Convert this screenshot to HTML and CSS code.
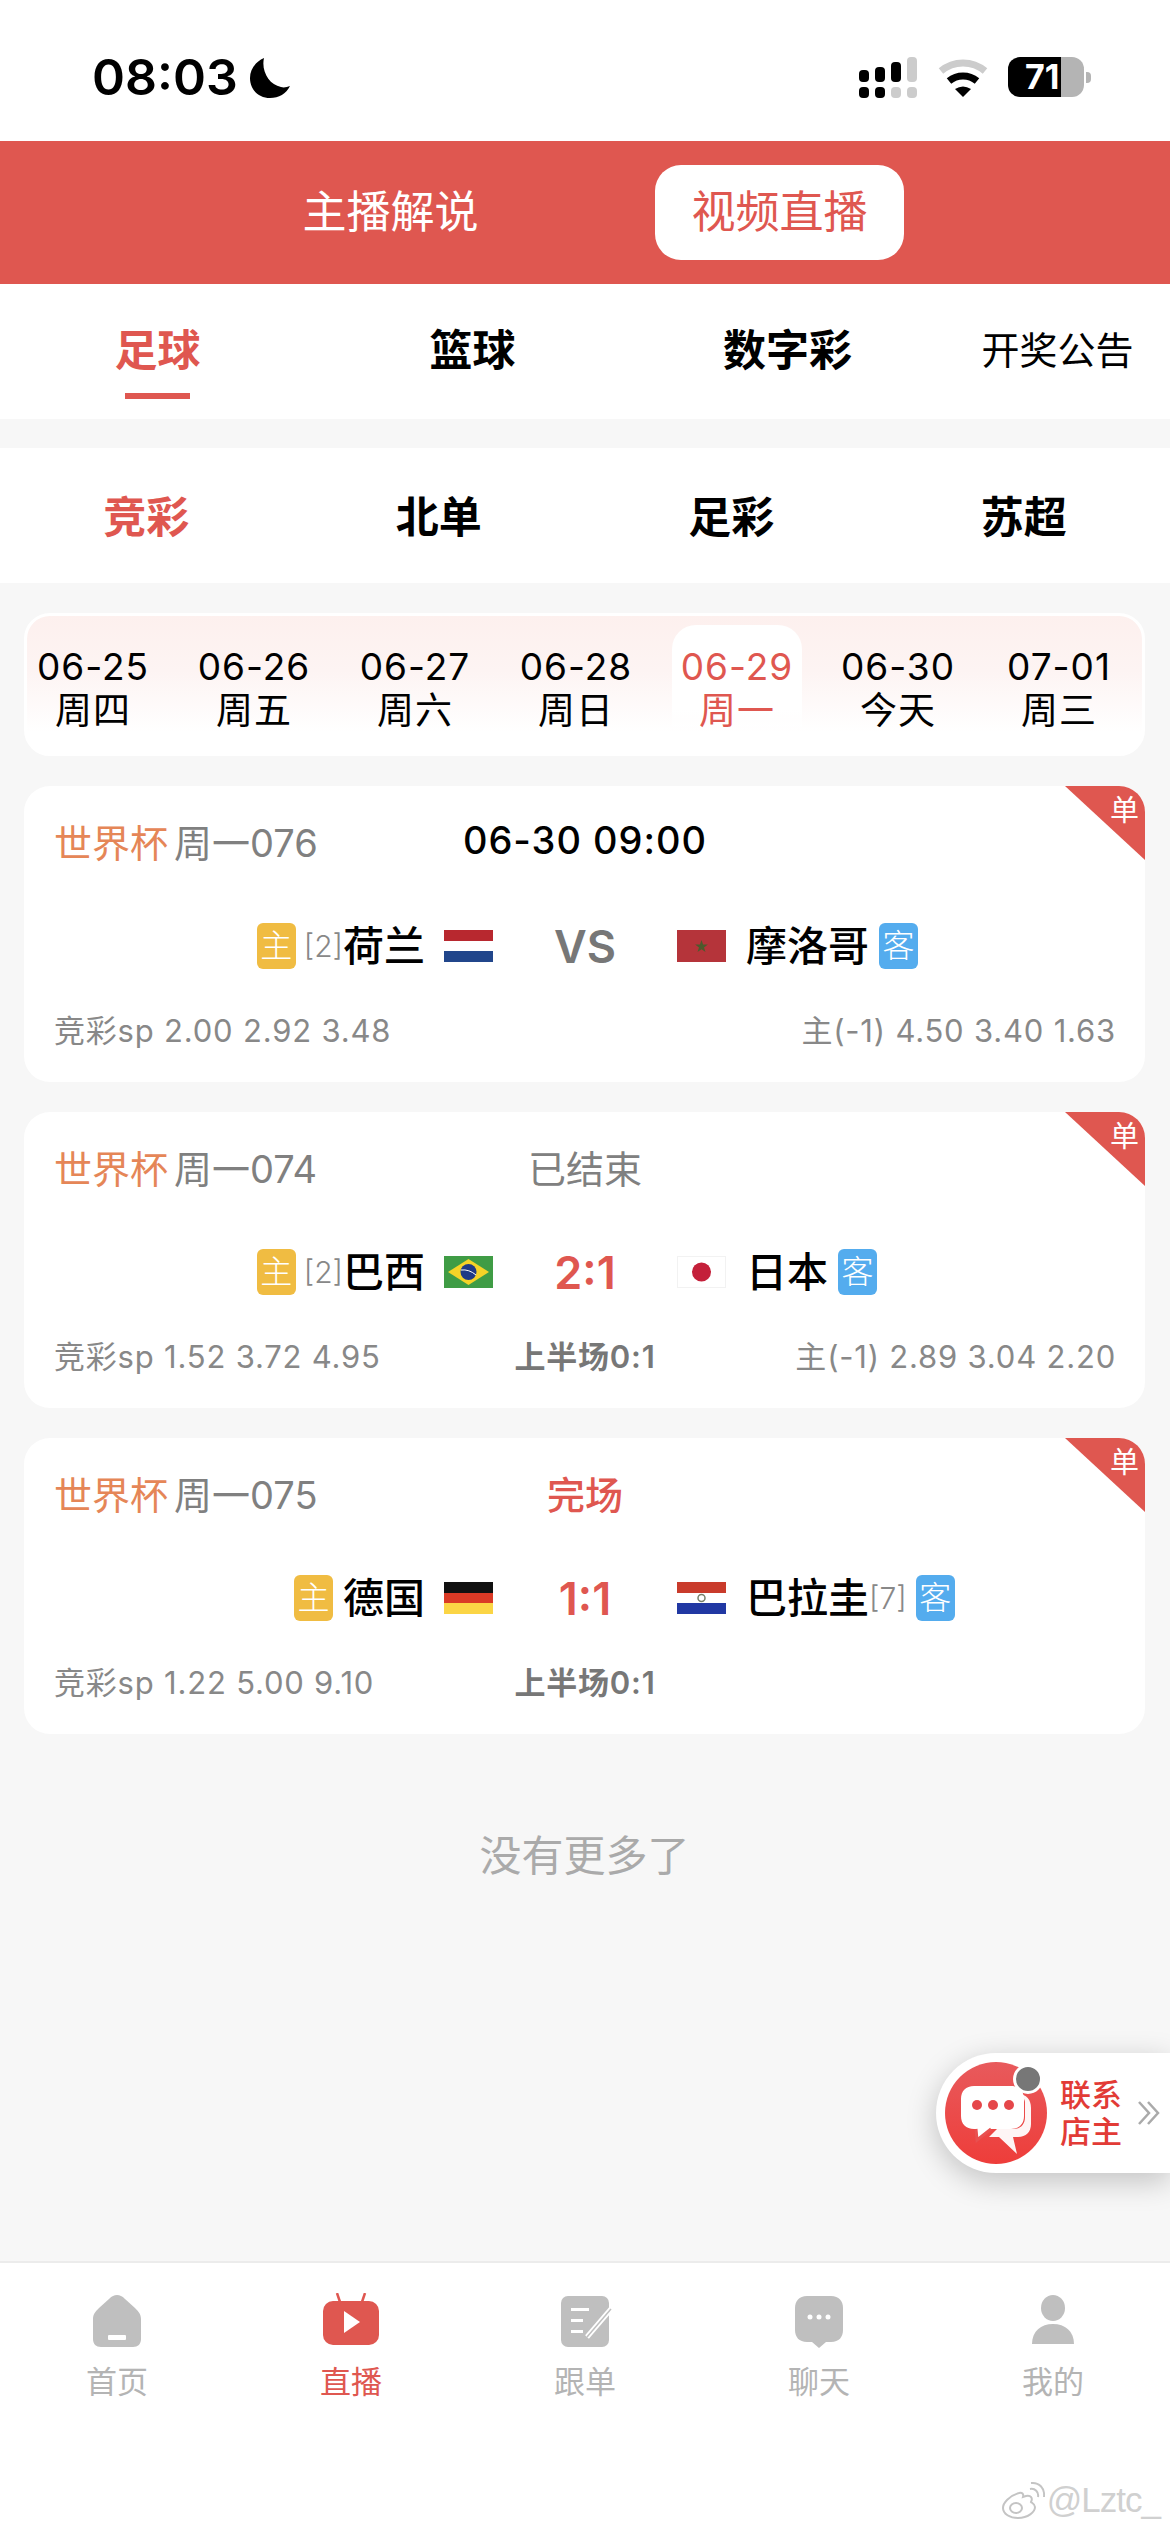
FILE: index.html
```html
<!DOCTYPE html>
<html lang="zh-CN">
<head>
<meta charset="UTF-8" />
<meta name="viewport" content="width=device-width, initial-scale=1" />
<title>视频直播</title>
<link rel="stylesheet" href="styles.css">
</head>
<body>
  <div class="page">
    <div class="status-bar">
      <div class="clock">
        <span>08:03</span>
        <svg class="moon" viewBox="0 0 40 40"><path d="M14 0C5 4 0 12 0 20c0 12 9 20 20 20 9 0 16-4 20-12-3 1-6 2-9 1C19 27 11 13 14 0z"/></svg>
      </div>
      <svg class="status-icons" width="240" height="44" viewBox="0 0 240 44">
        <g fill="#000">
          <rect x="0" y="16" width="10" height="12" rx="4"/>
          <rect x="16" y="13" width="10" height="15" rx="4"/>
          <rect x="32" y="8" width="10" height="20" rx="4"/>
          <rect x="0" y="33" width="10" height="11" rx="4"/>
          <rect x="16" y="33" width="10" height="11" rx="4"/>
        </g>
        <g fill="#ccc">
          <rect x="48" y="3" width="10" height="25" rx="4"/>
          <rect x="32" y="33" width="10" height="11" rx="4"/>
          <rect x="48" y="33" width="10" height="11" rx="4"/>
        </g>
        <path d="M82 17 A34 34 0 0 1 126 17" fill="none" stroke="#ccc" stroke-width="7"/>
        <path d="M90 27 A22 22 0 0 1 118 27" fill="none" stroke="#000" stroke-width="7"/>
        <path d="M104 43 L96 35 Q104 30 112 35 Z" fill="#000"/>
      </svg>
      <div class="battery">
        <div class="battery-body"><span class="battery-level">71</span></div>
        <div class="battery-nub"></div>
      </div>
    </div>

    <div class="top-switch">
      <div class="switch-item">主播解说</div>
      <div class="switch-item active">视频直播</div>
    </div>

    <div class="sport-tabs">
      <div class="sport-tab active">足球</div>
      <div class="sport-tab">篮球</div>
      <div class="sport-tab">数字彩</div>
      <div class="sport-tab plain">开奖公告</div>
    </div>

    <div class="lottery-tabs">
      <div class="lottery-tab active">竞彩</div>
      <div class="lottery-tab">北单</div>
      <div class="lottery-tab">足彩</div>
      <div class="lottery-tab">苏超</div>
    </div>

    <div class="content">
      <div class="dates">
        <div class="date"><span>06-25</span><span>周四</span></div>
        <div class="date"><span>06-26</span><span>周五</span></div>
        <div class="date"><span>06-27</span><span>周六</span></div>
        <div class="date"><span>06-28</span><span>周日</span></div>
        <div class="date active"><span>06-29</span><span>周一</span></div>
        <div class="date"><span>06-30</span><span>今天</span></div>
        <div class="date"><span>07-01</span><span>周三</span></div>
      </div>

      <div class="card">
        <div class="ribbon"><span>单</span></div>
        <div class="card-head">
          <div><span class="league">世界杯</span><span class="num">周一076</span></div>
          <div class="state time">06-30 09:00</div>
          <div></div>
        </div>
        <div class="match">
          <div class="team home">
            <span class="side home-side">主</span><span class="rank">[2]</span><span class="name">荷兰</span>
            <svg class="flag" viewBox="0 0 49 32"><rect width="49" height="11" fill="#b8282f"/><rect y="11" width="49" height="10" fill="#fff"/><rect y="21" width="49" height="11" fill="#21468b"/></svg>
          </div>
          <div class="score vs">VS</div>
          <div class="team away">
            <svg class="flag" viewBox="0 0 49 32"><rect width="49" height="32" fill="#b5343a"/><path d="M24.5 10l1.6 4.6h4.8l-3.9 2.9 1.5 4.6-4-2.8-4 2.8 1.500-4.600-3.900-2.900h4.800z" fill="#4d5a2c"/></svg>
            <span class="name">摩洛哥</span><span class="side away-side">客</span>
          </div>
        </div>
        <div class="odds">
          <div>竞彩sp 2.00 2.92 3.48</div>
          <div class="half"></div>
          <div class="odds-right">主(-1) 4.50 3.40 1.63</div>
        </div>
      </div>

      <div class="card">
        <div class="ribbon"><span>单</span></div>
        <div class="card-head">
          <div><span class="league">世界杯</span><span class="num">周一074</span></div>
          <div class="state">已结束</div>
          <div></div>
        </div>
        <div class="match">
          <div class="team home">
            <span class="side home-side">主</span><span class="rank">[2]</span><span class="name">巴西</span>
            <svg class="flag" viewBox="0 0 49 32"><rect width="49" height="32" fill="#3f9c45"/><path d="M24.5 3L45 16 24.5 29 4 16z" fill="#f5d327"/><circle cx="24.5" cy="16" r="8" fill="#1f3a86"/><path d="M17 14q8-1 15 5" stroke="#fff" stroke-width="1" fill="none"/></svg>
          </div>
          <div class="score">2:1</div>
          <div class="team away">
            <svg class="flag" viewBox="0 0 49 32"><rect x=".5" y=".5" width="48" height="31" fill="#fff" stroke="#f2f2f2"/><circle cx="24.5" cy="16" r="9.500" fill="#c4203a"/></svg>
            <span class="name">日本</span><span class="side away-side">客</span>
          </div>
        </div>
        <div class="odds">
          <div>竞彩sp 1.52 3.72 4.95</div>
          <div class="half">上半场0:1</div>
          <div class="odds-right">主(-1) 2.89 3.04 2.20</div>
        </div>
      </div>

      <div class="card">
        <div class="ribbon"><span>单</span></div>
        <div class="card-head">
          <div><span class="league">世界杯</span><span class="num">周一075</span></div>
          <div class="state done">完场</div>
          <div></div>
        </div>
        <div class="match">
          <div class="team home">
            <span class="side home-side no-rank">主</span><span class="name">德国</span>
            <svg class="flag" viewBox="0 0 49 32"><rect width="49" height="11" fill="#111"/><rect y="11" width="49" height="10" fill="#da3a26"/><rect y="21" width="49" height="11" fill="#fbd545"/></svg>
          </div>
          <div class="score">1:1</div>
          <div class="team away">
            <svg class="flag" viewBox="0 0 49 32"><rect width="49" height="11" fill="#c93b2b"/><rect y="11" width="49" height="10" fill="#fff"/><rect y="21" width="49" height="11" fill="#2138a3"/><circle cx="24.5" cy="16" r="3.500" fill="none" stroke="#77806a" stroke-width="1.500"/></svg>
            <span class="name">巴拉圭</span><span class="rank">[7]</span><span class="side away-side">客</span>
          </div>
        </div>
        <div class="odds">
          <div>竞彩sp 1.22 5.00 9.10</div>
          <div class="half">上半场0:1</div>
          <div></div>
        </div>
      </div>

      <div class="no-more">没有更多了</div>
    </div>

    <div class="contact">
      <div class="contact-icon">
        <svg viewBox="0 0 102 102" width="102" height="102">
          <defs><linearGradient id="contactRed" x1="0" y1="0" x2="0" y2="1"><stop offset="0" stop-color="#e85a5c"/><stop offset="1" stop-color="#ee3d3a"/></linearGradient></defs>
          <circle cx="51" cy="51" r="51" fill="url(#contactRed)"/>
          <path d="M70 32h2c10 0 14 6 14 14v16c0 8-5 13-13 13h-5l4 17-18-17H44l8-8h16c8 0 12-5 12-12V40c0-3-3-6-10-8z" fill="#fff" opacity=".95"/>
          <path d="M29 24h37c9 0 13 6 13 13v17c0 8-5 13-13 13H46L32 78l-1-11h-2c-8 0-13-5-13-13V37c0-8 5-13 13-13z" fill="#fff"/>
          <path d="M46 67L32 78l-1-11" fill="none" stroke="#e85050" stroke-width="3"/>
          <circle cx="32" cy="43" r="5" fill="#e5474a"/><circle cx="48" cy="43" r="5" fill="#e5474a"/><circle cx="64" cy="43" r="5" fill="#e5474a"/>
        </svg>
        <span class="contact-dot"></span>
      </div>
      <div class="contact-text">联系<br>店主</div>
      <svg class="contact-more" width="22" height="26" viewBox="0 0 22 26"><path d="M1 2l10 11L1 24M10 2l10 11-10 11" fill="none" stroke="#aaa" stroke-width="2.500"/></svg>
    </div>

    <div class="tab-bar">
      <div class="tab-item">
        <svg class="tab-icon" viewBox="0 0 56 56"><path d="M28 2c3 0 5 1 8 4l10 9c3 3 6 6 6 11v20c0 5-3 8-8 8H12c-5 0-8-3-8-8V26c0-5 3-8 6-11L20 6c3-3 5-4 8-4z" fill="#bfbfbf"/><rect x="19" y="42" width="18" height="5" rx="1" fill="#fff"/></svg>
        <span>首页</span>
      </div>
      <div class="tab-item active">
        <svg class="tab-icon" viewBox="0 0 56 56"><path d="M17 9L14 0M39 9l3-9" stroke="#df5750" stroke-width="2.500"/><rect y="8" width="56" height="44" rx="10" fill="#df5750"/><path d="M21 18l16 11-16 11z" fill="#fff"/></svg>
        <span>直播</span>
      </div>
      <div class="tab-item">
        <svg class="tab-icon" viewBox="0 0 56 56"><rect x="4" y="3" width="48" height="51" rx="7" fill="#bfbfbf"/><rect x="14" y="15" width="18" height="3" fill="#fff"/><rect x="14" y="26" width="12" height="3" fill="#fff"/><rect x="14" y="37" width="12" height="3" fill="#fff"/><path d="M30 44L54 16" stroke="#fff" stroke-width="5"/><path d="M30 44L54 16" stroke="#bfbfbf" stroke-width="1.500"/></svg>
        <span>跟单</span>
      </div>
      <div class="tab-item">
        <svg class="tab-icon" viewBox="0 0 56 56"><path d="M16 3h24c8 0 12 5 12 12v22c0 7-4 12-12 12h-5l-7 6-7-6h-5C8 49 4 44 4 37V15C4 8 8 3 16 3z" fill="#bfbfbf"/><circle cx="19" cy="24" r="2.500" fill="#fff"/><circle cx="28" cy="24" r="2.500" fill="#fff"/><circle cx="37" cy="24" r="2.500" fill="#fff"/></svg>
        <span>聊天</span>
      </div>
      <div class="tab-item">
        <svg class="tab-icon" viewBox="0 0 56 56"><ellipse cx="28" cy="15" rx="12" ry="13" fill="#bfbfbf"/><path d="M7 51c0-13 9-20 21-20s21 7 21 20z" fill="#bfbfbf"/></svg>
        <span>我的</span>
      </div>
    </div>

    <div class="watermark">
      <svg width="44" height="38" viewBox="0 0 44 38"><path d="M18 12C8 15 2 22 2 27c0 6 7 10 15 10 10 0 17-6 17-11 0-3-3-4-4-5 2-4 0-7-5-6l-3 1c1-3-1-5-4-4z" fill="#fff" stroke="#c4c4c4" stroke-width="2"/><ellipse cx="15" cy="27" rx="6" ry="5" fill="none" stroke="#c4c4c4" stroke-width="2"/><path d="M29 8c5-1 9 3 8 8M30 2c8-1 14 5 13 14" fill="none" stroke="#c4c4c4" stroke-width="2"/></svg>
      <span>@Lztc_</span>
    </div>
  </div>
</body>
</html>
```

FILE: styles.css
```css
* {
  box-sizing: border-box;
}
body {
  margin: 0;
  background-color: #f7f7f7;
  color: #000;
  font-family: "Inter", "Noto Sans CJK SC", sans-serif;
}
.page {
  position: relative;
  width: 1170px;
  height: 2532px;
  display: flex;
  flex-direction: column;
  overflow: hidden;
}

.status-bar {
  height: 141px;
  background-color: #fff;
  display: flex;
  align-items: flex-start;
  padding: 54px 79px 0 92px;
}
.clock {
  display: flex;
  align-items: center;
  gap: 12px;
  font-size: 50px;
  font-weight: 600;
  line-height: 46px;
  flex: 1;
}
.moon {
  width: 40px;
  height: 40px;
  margin-top: 2px;
}
.battery {
  display: flex;
  align-items: center;
  margin-left: -91px;
  margin-top: 3px;
}
.battery-body {
  width: 76px;
  height: 40px;
  border-radius: 12px;
  background: linear-gradient(90deg, #000 53px, #b4b4b4 53px);
  color: #fff;
  font-size: 34px;
  font-weight: 700;
  line-height: 40px;
  padding-left: 17px;
}
.battery-level {
  display: block;
  height: 40px;
}
.battery-nub {
  width: 5px;
  height: 11px;
  margin-left: 2px;
  background-color: #b4b4b4;
  border-radius: 0 4px 4px 0;
}

.top-switch {
  height: 143px;
  background-color: #df5750;
  display: flex;
  justify-content: center;
  align-items: center;
  gap: 140px;
}
.switch-item {
  width: 249px;
  height: 95px;
  line-height: 95px;
  text-align: center;
  color: #fff;
  font-size: 44px;
  border-radius: 26px;
}
.switch-item.active {
  background-color: #fff;
  color: #df5750;
}

.sport-tabs {
  height: 135px;
  padding-bottom: 9px;
  background-color: #fff;
  display: grid;
  grid-template-columns: repeat(3, 315px) 1fr;
  align-items: center;
}
.sport-tab {
  position: relative;
  text-align: center;
  font-size: 43px;
  font-weight: 700;
}
.sport-tab.active {
  color: #df5750;
}
.sport-tab.active::after {
  content: "";
  position: absolute;
  left: 125px;
  bottom: -21px;
  width: 65px;
  height: 6px;
  background-color: #df5750;
}
.sport-tab.plain {
  font-size: 38px;
  font-weight: 400;
}

.lottery-tabs {
  height: 135px;
  padding-bottom: 3px;
  margin-top: 29px;
  background-color: #fff;
  display: grid;
  grid-template-columns: repeat(4, 1fr);
  align-items: center;
}
.lottery-tab {
  text-align: center;
  font-size: 43px;
  font-weight: 700;
}
.lottery-tab.active {
  color: #df5750;
}

.content {
  flex: 1;
  padding: 30px 25px 0 24px;
}
.dates {
  height: 143px;
  border: 3px solid #fff;
  border-radius: 26px;
  background: linear-gradient(180deg, #fdf0ee 0%, #fdf4f3 40%, #fff 85%);
  display: flex;
  gap: 31px;
  padding-top: 9px;
  overflow: hidden;
}
.date {
  flex: none;
  width: 130px;
  height: 120px;
  border-radius: 24px 24px 0 0;
  display: flex;
  flex-direction: column;
  align-items: center;
  font-size: 37px;
  letter-spacing: 1px;
  line-height: 44px;
  padding-top: 20px;
}
.date:first-child {
  margin-left: 1px;
}
.date.active {
  background: linear-gradient(180deg, #fff 0%, #fff 70%, rgba(255, 255, 255, 0) 100%);
  color: #df5750;
}

.card {
  position: relative;
  height: 296px;
  margin-top: 30px;
  padding: 0 29px 0 30px;
  background-color: #fff;
  border-radius: 26px;
  overflow: hidden;
}
.ribbon {
  position: absolute;
  top: 0;
  right: 0;
  width: 80px;
  height: 74px;
  background-color: #df5750;
  clip-path: polygon(0 0, 100% 0, 100% 100%);
}
.ribbon span {
  position: absolute;
  top: 8px;
  right: 6px;
  color: #fff;
  font-size: 29px;
  line-height: 34px;
}
.card-head {
  height: 108px;
  display: grid;
  grid-template-columns: 1fr auto 1fr;
  align-items: center;
  font-size: 38px;
}
.league {
  color: #e58657;
  margin-right: 6px;
}
.num {
  color: #808080;
}
.state {
  color: #808080;
}
.state.time {
  color: #000;
  font-weight: 500;
  letter-spacing: 1px;
}
.state.done {
  color: #df5750;
  font-weight: 500;
}
.match {
  height: 100px;
  padding-top: 4px;
  display: grid;
  grid-template-columns: 1fr 184px 1fr;
  align-items: center;
}
.team {
  display: flex;
  align-items: center;
}
.team.home {
  justify-content: flex-end;
}
.name {
  font-size: 41px;
  font-weight: 500;
  line-height: 46px;
}
.rank {
  color: #888;
  font-size: 30px;
  font-weight: 300;
}
.side {
  width: 39px;
  height: 46px;
  line-height: 46px;
  border-radius: 6px;
  text-align: center;
  color: #fff;
  font-size: 32px;
  font-weight: 300;
}
.home-side {
  background-color: #f0bc42;
  margin-right: 8px;
}
.home-side.no-rank {
  margin-right: 10px;
}
.away-side {
  background-color: #54acee;
  margin-left: 10px;
}
.rank + .away-side {
  margin-left: 9px;
}
.flag {
  flex: none;
  width: 49px;
  height: 32px;
}
.home .flag {
  margin-left: 19px;
}
.away .flag {
  margin-right: 20px;
}
.score {
  text-align: center;
  color: #df5750;
  font-size: 45px;
  font-weight: 600;
}
.score.vs {
  color: #777;
}
.odds {
  height: 68px;
  display: grid;
  grid-template-columns: 1fr auto 1fr;
  align-items: center;
  color: #888;
  font-size: 31px;
  letter-spacing: 0.8px;
}
.half {
  color: #777;
  font-weight: 600;
}
.odds-right {
  text-align: right;
}
.no-more {
  margin-top: 93px;
  text-align: center;
  color: #aaa;
  font-size: 42px;
  line-height: 58px;
}

.contact {
  position: absolute;
  top: 2053px;
  right: 0;
  width: 234px;
  height: 120px;
  background-color: #fff;
  border-radius: 60px 0 0 60px;
  box-shadow: 0 8px 30px rgba(0, 0, 0, 0.22);
  display: flex;
  align-items: center;
  padding-left: 9px;
}
.contact-icon {
  position: relative;
  width: 102px;
  height: 102px;
}
.contact-icon svg {
  display: block;
}
.contact-dot {
  position: absolute;
  top: 2px;
  left: 68px;
  width: 24px;
  height: 24px;
  background-color: #777;
  border: 3px solid #fff;
  border-radius: 50%;
  box-sizing: content-box;
}
.contact-text {
  margin-left: 13px;
  color: #e23b36;
  font-size: 31px;
  font-weight: 500;
  line-height: 37px;
}
.contact-more {
  margin-left: 16px;
}

.tab-bar {
  height: 271px;
  background-color: #fff;
  border-top: 2px solid #ececec;
  display: grid;
  grid-template-columns: repeat(5, 1fr);
  padding-top: 30px;
  align-items: start;
}
.tab-item {
  display: flex;
  flex-direction: column;
  align-items: center;
  color: #b4b4b4;
  font-size: 31px;
  line-height: 42px;
}
.tab-item.active {
  color: #df5750;
}
.tab-icon {
  width: 56px;
  height: 56px;
  margin-bottom: 12px;
}

.watermark {
  position: absolute;
  right: 10px;
  bottom: 12px;
  display: flex;
  align-items: center;
  gap: 2px;
  color: #d0d0d0;
  font-size: 35px;
  font-weight: 500;
  letter-spacing: -1px;
  font-family: "Liberation Sans", sans-serif;
}
```
